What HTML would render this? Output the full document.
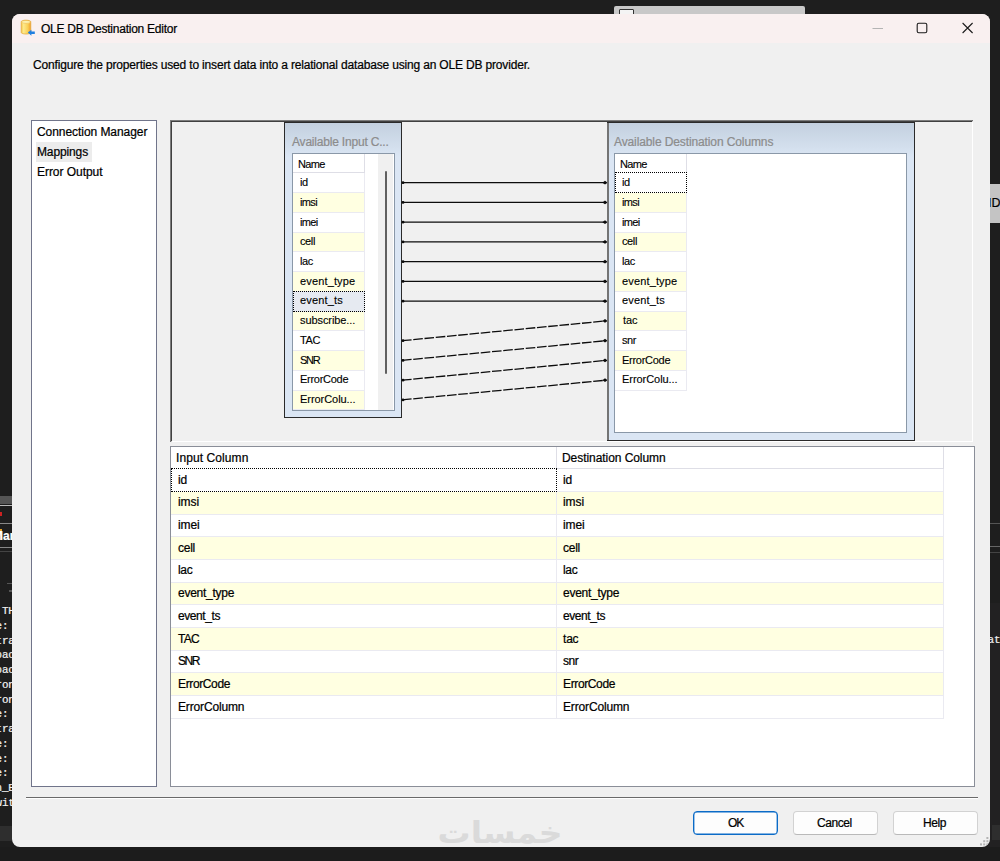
<!DOCTYPE html><html><head><meta charset="utf-8"><title>OLE DB Destination Editor</title><style>
*{box-sizing:border-box;margin:0;padding:0}
html,body{width:1000px;height:861px;overflow:hidden;background:#1e1e1e}
body{position:relative;-webkit-text-stroke:.22px currentColor;font-family:"Liberation Sans",sans-serif;font-size:12px;color:#000}
.abs{position:absolute}
.t{position:absolute;white-space:nowrap;line-height:16px;height:16px}
.s{font-size:11px;-webkit-text-stroke:.12px currentColor}
.term{position:absolute;font-family:"Liberation Mono",monospace;font-size:10.8px;letter-spacing:-.15px;color:#f2f2f2;white-space:pre;line-height:14px;height:14px;left:-4.4px}
#win{position:absolute;left:12px;top:14px;width:978px;height:833px;background:#f0f0f0;border-radius:8px;overflow:hidden}
#tb{position:absolute;left:0;top:0;width:978px;height:29px;background:#f9f0f0}
.cell{position:absolute;border-right:1px solid #eaeaf1;border-bottom:1px solid #eaeaf1;background:#fff}
.alt{background:#ffffe1}
.btn{position:absolute;height:24px;border:1px solid #d2d2d2;border-bottom-color:#b9b9b9;border-radius:4px;background:#fdfdfd}
</style></head><body>
<div class="abs" style="left:614px;top:6px;width:191px;height:12px;background:#c8c8c8;border-radius:2px 2px 0 0"></div>
<div class="abs" style="left:619px;top:9px;width:15px;height:8px;background:#f4f4f4;border:1px solid #333;border-radius:1px"></div>
<div class="abs" style="left:988px;top:184px;width:12px;height:39px;background:#c4c4c4"></div>
<div class="t" style="left:988px;top:195px;font-size:12.5px">ID</div>
<div class="abs" style="left:988px;top:523px;width:12px;height:1px;background:#555"></div>
<div class="abs" style="left:988px;top:546px;width:12px;height:1px;background:#666"></div>
<div class="abs" style="left:988px;top:552px;width:12px;height:1px;background:#444"></div>
<div class="abs" style="left:988px;top:603px;width:12px;height:244px;background:#222122"></div>
<div class="abs" style="left:992px;top:825px;width:8px;height:15px;background:#2e2e2e"></div>
<div class="t" style="left:987.5px;top:632px;font-family:'Liberation Mono',monospace;font-size:11px;color:#eee">at</div>
<div class="abs" style="left:0;top:496px;width:14px;height:8px;background:#555"></div>
<div class="abs" style="left:0;top:505px;width:14px;height:1px;background:#bbb"></div>
<div class="abs" style="left:0;top:512px;width:2px;height:4px;background:#c22"></div>
<div class="abs" style="left:0;top:523px;width:14px;height:1px;background:#888"></div>
<div class="abs" style="left:0;top:547px;width:14px;height:1px;background:#888"></div>
<div class="abs" style="left:0;top:551px;width:14px;height:1px;background:#444"></div>
<div class="abs" style="left:0;top:529px;width:2px;height:11px;background:#e8a020"></div>
<div class="t" style="left:-7px;top:528px;font-size:12px;color:#fff;font-weight:bold">Man</div>
<div class="abs" style="left:7px;top:583px;width:6px;height:1px;background:#555"></div>
<div class="abs" style="left:9px;top:590px;width:4px;height:2px;background:#555"></div>
<div class="term" style="top:604px">&nbsp;TH</div>
<div class="term" style="top:619px">e:</div>
<div class="term" style="top:634px">tra</div>
<div class="term" style="top:648px">bac</div>
<div class="term" style="top:663px">bac</div>
<div class="term" style="top:678px">ron</div>
<div class="term" style="top:693px">ron</div>
<div class="term" style="top:707px">e:</div>
<div class="term" style="top:722px">tra</div>
<div class="term" style="top:737px">e:</div>
<div class="term" style="top:752px">e:</div>
<div class="term" style="top:766px">e:</div>
<div class="term" style="top:781px">n_E</div>
<div class="term" style="top:796px">wit</div>
<div class="abs" style="left:0;top:826px;width:14px;height:15px;background:#2e2e2e"></div>
<div class="abs" style="left:0;top:847px;width:1000px;height:14px;background:#1c1c1c"></div>
<div id="win">
<div id="tb"></div>
<svg class="abs" style="left:8px;top:5px" width="18" height="18" viewBox="0 0 18 18">
<defs><linearGradient id="cy" x1="0" x2="1" y1="0" y2="0"><stop offset="0" stop-color="#f6c94a"/><stop offset=".25" stop-color="#fde98c"/><stop offset=".7" stop-color="#f9cf55"/><stop offset="1" stop-color="#f29a2a"/></linearGradient></defs>
<path d="M1.2 2.8 C1.2 .6 10.8 .6 10.8 2.8 L10.8 13.4 C10.8 15.6 1.2 15.6 1.2 13.4 Z" fill="url(#cy)" stroke="#e2a83a" stroke-width=".7"/>
<ellipse cx="6" cy="2.9" rx="4.3" ry="1.5" fill="#fdf2b0" stroke="#e8b040" stroke-width=".5"/>
<path d="M7.8 13.6 l3.6 -2.9 v1.7 h3.4 v2.6 h-3.4 v1.7 z" fill="#1f7fe0"/>
</svg>
<div class="t" style="left:29px;top:7px;letter-spacing:-0.243px;">OLE DB Destination Editor</div>
<svg class="abs" style="left:850px;top:0" width="128" height="29" viewBox="0 0 128 29">
<path d="M10.5 14.5 H21" stroke="#b4b4b4" stroke-width="1" fill="none"/>
<rect x="55.2" y="9.2" width="9.6" height="9.6" rx="1.6" fill="none" stroke="#1b1b1b" stroke-width="1.1"/>
<path d="M100.6 9 L110.6 19 M110.6 9 L100.6 19" stroke="#1b1b1b" stroke-width="1.1" fill="none"/>
</svg>
<div class="t" style="left:21px;top:43px;letter-spacing:-0.172px;">Configure the properties used to insert data into a relational database using an OLE DB provider.</div>
<div class="abs" style="left:19px;top:106px;width:126px;height:667px;background:#fff;border:1px solid #70748a"></div>
<div class="abs" style="left:24px;top:128px;width:56px;height:20px;background:#ececec"></div>
<div class="t" style="left:25px;top:110px;letter-spacing:-0.056px;">Connection Manager</div>
<div class="t" style="left:25px;top:130px;letter-spacing:-0.129px;">Mappings</div>
<div class="t" style="left:25px;top:150px;letter-spacing:-0.044px;">Error Output</div>
<div class="abs" style="left:158px;top:106px;width:803px;height:322px;background:#f0f0f0;border-top:2px solid #404040;border-left:2px solid #404040;border-right:1px solid #fff;border-bottom:1px solid #fff"></div>
<div class="abs" style="left:158px;top:106px;width:802px;height:1px;background:#7c7c7c"></div>
<div class="abs" style="left:158px;top:106px;width:1px;height:321px;background:#7c7c7c"></div>
<div class="abs" style="left:272px;top:108px;width:118px;height:296px;border:1px solid #2a2a2a;background:linear-gradient(#c3d0df 0px,#d3dfed 24px,#dbe6f4 34px,#dbe6f4 100%)"></div>
<div class="abs" style="left:280px;top:139px;width:103px;height:258px;border:1px solid #8a98a8;background:#fff"></div>
<div class="t" style="left:280px;top:120px;letter-spacing:-0.196px;color:#8c8c8c;">Available Input C...</div>
<div class="abs" style="left:595px;top:108px;width:308px;height:319px;border:1px solid #2a2a2a;background:linear-gradient(#c3d0df 0px,#d3dfed 24px,#dbe6f4 34px,#dbe6f4 100%)"></div>
<div class="abs" style="left:602px;top:139px;width:293px;height:280px;border:1px solid #8a98a8;background:#fff"></div>
<div class="t" style="left:602px;top:120px;letter-spacing:-0.112px;color:#8c8c8c;">Available Destination Columns</div>
<div class="cell" style="left:281px;top:140px;width:72px;height:19px;border-color:#dedee6"></div>
<div class="t s" style="left:286px;top:142px;letter-spacing:-0.636px;">Name</div>
<div class="cell" style="left:281px;top:159px;width:72px;height:20px;"></div>
<div class="t s" style="left:288px;top:160px;letter-spacing:-0.481px;">id</div>
<div class="cell alt" style="left:281px;top:179px;width:72px;height:20px;"></div>
<div class="t s" style="left:288px;top:180px;letter-spacing:-0.641px;">imsi</div>
<div class="cell" style="left:281px;top:199px;width:72px;height:20px;"></div>
<div class="t s" style="left:288px;top:200px;letter-spacing:-0.618px;">imei</div>
<div class="cell alt" style="left:281px;top:219px;width:72px;height:19px;"></div>
<div class="t s" style="left:288px;top:219px;letter-spacing:-0.379px;">cell</div>
<div class="cell" style="left:281px;top:238px;width:72px;height:20px;"></div>
<div class="t s" style="left:288px;top:239px;letter-spacing:-0.354px;">lac</div>
<div class="cell alt" style="left:281px;top:258px;width:72px;height:20px;"></div>
<div class="t s" style="left:288px;top:259px;letter-spacing:0.147px;">event_type</div>
<div class="cell" style="left:281px;top:277px;width:72px;height:21px;border:1px dotted #000;background:#e6eaf1;"></div>
<div class="t s" style="left:288px;top:278px;letter-spacing:0.151px;">event_ts</div>
<div class="cell alt" style="left:281px;top:298px;width:72px;height:19px;"></div>
<div class="t s" style="left:288px;top:298px;letter-spacing:-0.079px;">subscribe...</div>
<div class="cell" style="left:281px;top:317px;width:72px;height:20px;"></div>
<div class="t s" style="left:288px;top:318px;letter-spacing:-0.396px;">TAC</div>
<div class="cell alt" style="left:281px;top:337px;width:72px;height:20px;"></div>
<div class="t s" style="left:288px;top:338px;letter-spacing:-1.245px;">SNR</div>
<div class="cell" style="left:281px;top:357px;width:72px;height:20px;"></div>
<div class="t s" style="left:288px;top:357px;letter-spacing:-0.272px;">ErrorCode</div>
<div class="cell alt" style="left:281px;top:377px;width:72px;height:19px;"></div>
<div class="t s" style="left:288px;top:377px;letter-spacing:-0.054px;">ErrorColu...</div>
<div class="cell" style="left:603px;top:140px;width:72px;height:19px;border-color:#dedee6"></div>
<div class="t s" style="left:608px;top:142px;letter-spacing:-0.636px;">Name</div>
<div class="cell" style="left:603px;top:158px;width:72px;height:21px;border:1px dotted #000;background:#fff;"></div>
<div class="t s" style="left:610px;top:160px;letter-spacing:-0.481px;">id</div>
<div class="cell alt" style="left:603px;top:179px;width:72px;height:20px;"></div>
<div class="t s" style="left:610px;top:180px;letter-spacing:-0.641px;">imsi</div>
<div class="cell" style="left:603px;top:199px;width:72px;height:20px;"></div>
<div class="t s" style="left:610px;top:200px;letter-spacing:-0.618px;">imei</div>
<div class="cell alt" style="left:603px;top:219px;width:72px;height:19px;"></div>
<div class="t s" style="left:610px;top:219px;letter-spacing:-0.379px;">cell</div>
<div class="cell" style="left:603px;top:238px;width:72px;height:20px;"></div>
<div class="t s" style="left:610px;top:239px;letter-spacing:-0.354px;">lac</div>
<div class="cell alt" style="left:603px;top:258px;width:72px;height:20px;"></div>
<div class="t s" style="left:610px;top:259px;letter-spacing:0.147px;">event_type</div>
<div class="cell" style="left:603px;top:278px;width:72px;height:20px;"></div>
<div class="t s" style="left:610px;top:278px;letter-spacing:0.151px;">event_ts</div>
<div class="cell alt" style="left:603px;top:298px;width:72px;height:19px;"></div>
<div class="t s" style="left:611px;top:298px;letter-spacing:-0.129px;">tac</div>
<div class="cell" style="left:603px;top:317px;width:72px;height:20px;"></div>
<div class="t s" style="left:610px;top:318px;letter-spacing:-0.394px;">snr</div>
<div class="cell alt" style="left:603px;top:337px;width:72px;height:20px;"></div>
<div class="t s" style="left:610px;top:338px;letter-spacing:-0.272px;">ErrorCode</div>
<div class="cell" style="left:603px;top:357px;width:72px;height:20px;"></div>
<div class="t s" style="left:610px;top:357px;letter-spacing:-0.054px;">ErrorColu...</div>
<div class="abs" style="left:366px;top:140px;width:15px;height:256px;background:#f0f0f0"></div>
<div class="abs" style="left:373px;top:157px;width:2px;height:203px;background:#606060;border-radius:1px"></div>
<svg class="abs" style="left:0;top:0" width="978" height="833" viewBox="12 14 978 833"><path d="M402 182.7 H606" stroke="#0c0c0c" stroke-width="1.3" fill="none"/><path d="M607.6 182.7 l-2.6 -1.9 l-2.6 1.9 l2.6 1.9 z" fill="#0c0c0c"/><circle cx="403" cy="182.7" r="1.4" fill="#0c0c0c"/><path d="M402 202.4 H606" stroke="#0c0c0c" stroke-width="1.3" fill="none"/><path d="M607.6 202.4 l-2.6 -1.9 l-2.6 1.9 l2.6 1.9 z" fill="#0c0c0c"/><circle cx="403" cy="202.4" r="1.4" fill="#0c0c0c"/><path d="M402 222.2 H606" stroke="#0c0c0c" stroke-width="1.3" fill="none"/><path d="M607.6 222.2 l-2.6 -1.9 l-2.6 1.9 l2.6 1.9 z" fill="#0c0c0c"/><circle cx="403" cy="222.2" r="1.4" fill="#0c0c0c"/><path d="M402 241.9 H606" stroke="#0c0c0c" stroke-width="1.3" fill="none"/><path d="M607.6 241.9 l-2.6 -1.9 l-2.6 1.9 l2.6 1.9 z" fill="#0c0c0c"/><circle cx="403" cy="241.9" r="1.4" fill="#0c0c0c"/><path d="M402 261.7 H606" stroke="#0c0c0c" stroke-width="1.3" fill="none"/><path d="M607.6 261.7 l-2.6 -1.9 l-2.6 1.9 l2.6 1.9 z" fill="#0c0c0c"/><circle cx="403" cy="261.7" r="1.4" fill="#0c0c0c"/><path d="M402 281.4 H606" stroke="#0c0c0c" stroke-width="1.3" fill="none"/><path d="M607.6 281.4 l-2.6 -1.9 l-2.6 1.9 l2.6 1.9 z" fill="#0c0c0c"/><circle cx="403" cy="281.4" r="1.4" fill="#0c0c0c"/><path d="M402 301.2 H606" stroke="#0c0c0c" stroke-width="1.3" fill="none"/><path d="M607.6 301.2 l-2.6 -1.9 l-2.6 1.9 l2.6 1.9 z" fill="#0c0c0c"/><circle cx="403" cy="301.2" r="1.4" fill="#0c0c0c"/><path d="M402 340.7 L606 320.9" stroke="#0c0c0c" stroke-width="1.3" stroke-dasharray="9.6 1.7" fill="none"/><path d="M607.6 320.9 l-2.6 -1.9 l-2.6 1.9 l2.6 1.9 z" fill="#0c0c0c"/><circle cx="403" cy="340.7" r="1.4" fill="#0c0c0c"/><path d="M402 360.4 L606 340.7" stroke="#0c0c0c" stroke-width="1.3" stroke-dasharray="9.6 1.7" fill="none"/><path d="M607.6 340.7 l-2.6 -1.9 l-2.6 1.9 l2.6 1.9 z" fill="#0c0c0c"/><circle cx="403" cy="360.4" r="1.4" fill="#0c0c0c"/><path d="M402 380.2 L606 360.4" stroke="#0c0c0c" stroke-width="1.3" stroke-dasharray="9.6 1.7" fill="none"/><path d="M607.6 360.4 l-2.6 -1.9 l-2.6 1.9 l2.6 1.9 z" fill="#0c0c0c"/><circle cx="403" cy="380.2" r="1.4" fill="#0c0c0c"/><path d="M402 399.9 L606 380.2" stroke="#0c0c0c" stroke-width="1.3" stroke-dasharray="9.6 1.7" fill="none"/><path d="M607.6 380.2 l-2.6 -1.9 l-2.6 1.9 l2.6 1.9 z" fill="#0c0c0c"/><circle cx="403" cy="399.9" r="1.4" fill="#0c0c0c"/></svg>
<div class="abs" style="left:595px;top:109px;width:2px;height:317px;background:#747474"></div>
<div class="abs" style="left:158px;top:432px;width:805px;height:341px;background:#fff;border:1px solid #8a8e98"></div>
<div class="cell" style="left:159px;top:433px;width:386px;height:22px;border-color:#dedee6"></div>
<div class="cell" style="left:545px;top:433px;width:387px;height:22px;border-color:#dedee6"></div>
<div class="t" style="left:164px;top:436px;letter-spacing:0.085px;">Input Column</div>
<div class="t" style="left:550px;top:436px;letter-spacing:-0.062px;">Destination Column</div>
<div class="cell" style="left:159px;top:454px;width:386px;height:24px;border:1px dotted #000;"></div>
<div class="cell" style="left:545px;top:455px;width:387px;height:23px"></div>
<div class="t" style="left:166px;top:458px;letter-spacing:-0.222px;">id</div>
<div class="t" style="left:551px;top:458px;letter-spacing:-0.222px;">id</div>
<div class="cell alt" style="left:159px;top:478px;width:386px;height:23px;"></div>
<div class="cell alt" style="left:545px;top:478px;width:387px;height:23px"></div>
<div class="t" style="left:166px;top:480px;letter-spacing:-0.057px;">imsi</div>
<div class="t" style="left:551px;top:480px;letter-spacing:-0.057px;">imsi</div>
<div class="cell" style="left:159px;top:501px;width:386px;height:22px;"></div>
<div class="cell" style="left:545px;top:501px;width:387px;height:22px"></div>
<div class="t" style="left:166px;top:503px;letter-spacing:-0.104px;">imei</div>
<div class="t" style="left:551px;top:503px;letter-spacing:-0.104px;">imei</div>
<div class="cell alt" style="left:159px;top:523px;width:386px;height:23px;"></div>
<div class="cell alt" style="left:545px;top:523px;width:387px;height:23px"></div>
<div class="t" style="left:166px;top:526px;letter-spacing:-0.254px;">cell</div>
<div class="t" style="left:551px;top:526px;letter-spacing:-0.254px;">cell</div>
<div class="cell" style="left:159px;top:546px;width:386px;height:23px;"></div>
<div class="cell" style="left:545px;top:546px;width:387px;height:23px"></div>
<div class="t" style="left:166px;top:548px;letter-spacing:-0.348px;">lac</div>
<div class="t" style="left:551px;top:548px;letter-spacing:-0.348px;">lac</div>
<div class="cell alt" style="left:159px;top:569px;width:386px;height:22px;"></div>
<div class="cell alt" style="left:545px;top:569px;width:387px;height:22px"></div>
<div class="t" style="left:166px;top:571px;letter-spacing:-0.262px;">event_type</div>
<div class="t" style="left:551px;top:571px;letter-spacing:-0.262px;">event_type</div>
<div class="cell" style="left:159px;top:591px;width:386px;height:23px;"></div>
<div class="cell" style="left:545px;top:591px;width:387px;height:23px"></div>
<div class="t" style="left:166px;top:594px;letter-spacing:-0.422px;">event_ts</div>
<div class="t" style="left:551px;top:594px;letter-spacing:-0.422px;">event_ts</div>
<div class="cell alt" style="left:159px;top:614px;width:386px;height:23px;"></div>
<div class="cell alt" style="left:545px;top:614px;width:387px;height:23px"></div>
<div class="t" style="left:166px;top:617px;letter-spacing:-0.670px;">TAC</div>
<div class="t" style="left:551px;top:617px;letter-spacing:-0.205px;">tac</div>
<div class="cell" style="left:159px;top:637px;width:386px;height:22px;"></div>
<div class="cell" style="left:545px;top:637px;width:387px;height:22px"></div>
<div class="t" style="left:166px;top:639px;letter-spacing:-1.415px;">SNR</div>
<div class="t" style="left:551px;top:639px;letter-spacing:-0.424px;">snr</div>
<div class="cell alt" style="left:159px;top:659px;width:386px;height:23px;"></div>
<div class="cell alt" style="left:545px;top:659px;width:387px;height:23px"></div>
<div class="t" style="left:166px;top:662px;letter-spacing:-0.373px;">ErrorCode</div>
<div class="t" style="left:551px;top:662px;letter-spacing:-0.373px;">ErrorCode</div>
<div class="cell" style="left:159px;top:682px;width:386px;height:23px;"></div>
<div class="cell" style="left:545px;top:682px;width:387px;height:23px"></div>
<div class="t" style="left:166px;top:685px;letter-spacing:-0.156px;">ErrorColumn</div>
<div class="t" style="left:551px;top:685px;letter-spacing:-0.156px;">ErrorColumn</div>
<div class="abs" style="left:14px;top:783px;width:952px;height:1px;background:#6a6a6a"></div>
<div class="abs" style="left:14px;top:784px;width:952px;height:1px;background:#fff"></div>
<div class="abs" dir="rtl" lang="ar" style="left:420px;top:799px;width:136px;height:40px;font-family:'DejaVu Sans',sans-serif;font-size:30px;font-weight:bold;line-height:40px;transform:scaleX(1.1);color:#dadada;text-align:center;white-space:nowrap;-webkit-text-stroke:0">خمسات</div>
<div class="btn" style="left:681px;top:797px;width:85px;border:1px solid #0b6bc7;box-shadow:inset 0 0 0 .4px #0b6bc7"></div>
<div class="btn" style="left:781px;top:797px;width:85px"></div>
<div class="btn" style="left:881px;top:797px;width:85px"></div>
<div class="t" style="left:716px;top:801px;letter-spacing:-0.972px;">OK</div>
<div class="t" style="left:805px;top:801px;letter-spacing:-0.460px;">Cancel</div>
<div class="t" style="left:911px;top:801px;letter-spacing:-0.422px;">Help</div>
<svg class="abs" style="left:967px;top:822px" width="11" height="11" viewBox="0 0 11 11"><g fill="#b4b4b4"><rect x="7.4" y="1" width="2" height="2"/><rect x="4.2" y="4.2" width="2" height="2"/><rect x="7.4" y="4.2" width="2" height="2"/><rect x="1" y="7.4" width="2" height="2"/><rect x="4.2" y="7.4" width="2" height="2"/><rect x="7.4" y="7.4" width="2" height="2"/></g></svg>
</div>
</body></html>
